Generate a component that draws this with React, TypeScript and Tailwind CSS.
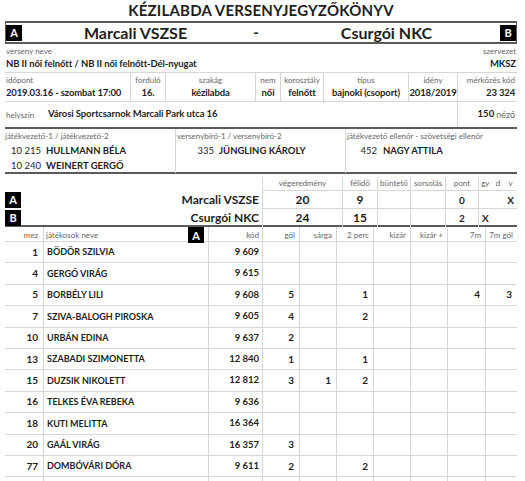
const players = [
  { mez: "1", name: "BÖDÖR SZILVIA", kod: "9 609", v: ["", "", "", "", "", "", ""] },
  { mez: "4", name: "GERGŐ VIRÁG", kod: "9 615", v: ["", "", "", "", "", "", ""] },
  { mez: "5", name: "BORBÉLY LILI", kod: "9 608", v: ["5", "", "1", "", "", "4", "3"] },
  { mez: "7", name: "SZIVA-BALOGH PIROSKA", kod: "9 605", v: ["4", "", "2", "", "", "", ""] },
  { mez: "10", name: "URBÁN EDINA", kod: "9 637", v: ["2", "", "", "", "", "", ""] },
  { mez: "13", name: "SZABADI SZIMONETTA", kod: "12 840", v: ["1", "", "1", "", "", "", ""] },
  { mez: "15", name: "DUZSIK NIKOLETT", kod: "12 812", v: ["3", "1", "2", "", "", "", ""] },
  { mez: "16", name: "TELKES ÉVA REBEKA", kod: "9 636", v: ["", "", "", "", "", "", ""] },
  { mez: "18", name: "KUTI MELITTA", kod: "16 364", v: ["", "", "", "", "", "", ""] },
  { mez: "20", name: "GAÁL VIRÁG", kod: "16 357", v: ["3", "", "", "", "", "", ""] },
  { mez: "77", name: "DOMBÓVÁRI DÓRA", kod: "9 611", v: ["2", "", "2", "", "", "", ""] },
  { mez: "", name: "", kod: "", v: ["", "", "", "", "", "", ""] },
];

const statHeads = ["gól", "sárga", "2 perc", "kizár", "kizár +", "7m", "7m gól"];

const Badge = ({ letter }: { letter: string }) => (
  <div className="w-[16px] h-[16px] bg-black text-white text-[11px] font-bold flex items-center justify-center leading-none">
    {letter}
  </div>
);

const playerGrid =
  "grid grid-cols-[38px_165px_54px_37px_37px_37px_37px_37px_38px_32px]";

const resultGrid = "grid grid-cols-[257px_80px_35px_33px_35px_33px_39px]";

export default function App() {
  return (
    <div className="w-[525px] h-[481px] overflow-hidden bg-white text-[#1e1e1e] font-[family-name:Lato,sans-serif]">
      <div className="w-[512px] ml-[5px]">
        {/* title */}
        <div className="h-[21px] flex items-center justify-center text-[15px] font-bold tracking-[0.2px]">
          KÉZILABDA VERSENYJEGYZŐKÖNYV
        </div>

        {/* teams */}
        <div className="h-[23px] border-y-2 border-x border-[#5a5a5a] flex items-center">
          <Badge letter="A" />
          <div className="flex-1 text-center text-[16px] font-bold">Marcali VSZSE</div>
          <div className="w-[14px] text-center text-[15px] font-bold">-</div>
          <div className="flex-1 text-center text-[16px] font-bold pl-[10px]">Csurgói NKC</div>
          <Badge letter="B" />
        </div>

        {/* competition */}
        <div className="flex justify-between text-[8px] text-[#666] h-[13px] items-end px-[1px]">
          <span>verseny neve</span>
          <span>szervezet</span>
        </div>
        <div className="flex justify-between text-[9.5px] font-bold h-[15px] items-center px-[1px] tracking-[-0.1px]">
          <span>NB II női felnőtt / NB II női felnőtt-Dél-nyugat</span>
          <span>MKSZ</span>
        </div>

        {/* info row */}
        <div className="grid grid-cols-[125px_35px_90px_25px_43px_85px_49px_60px] border-y border-[#d6d6d6]">
          {[
            ["időpont", "2019.03.16 - szombat 17:00", "text-left"],
            ["forduló", "16.", "text-center"],
            ["szakág", "kézilabda", "text-center"],
            ["nem", "női", "text-center"],
            ["korosztály", "felnőtt", "text-center"],
            ["típus", "bajnoki (csoport)", "text-center"],
            ["idény", "2018/2019", "text-center"],
            ["mérkőzés kód", "23 324", "text-right"],
          ].map(([label, value, align], i) => (
            <div
              key={label}
              className={`h-[28px] flex flex-col justify-center ${align} ${
                i > 0 ? "border-l border-[#d6d6d6]" : ""
              } ${i === 0 ? "pl-[1px]" : ""} ${i === 7 ? "pr-[2px]" : ""}`}
            >
              <div className="text-[8px] text-[#666] leading-[12px]">{label}</div>
              <div className="text-[9.5px] font-bold leading-[14px] whitespace-nowrap tracking-[-0.15px]">{value}</div>
            </div>
          ))}
        </div>

        {/* venue */}
        <div className="flex h-[25px]">
          <div className="flex-1 flex items-center pl-[1px]">
            <span className="text-[8px] text-[#666] w-[42px]">helyszín</span>
            <span className="text-[9.5px] font-bold tracking-[-0.1px]">Városi Sportcsarnok Marcali Park utca 16</span>
          </div>
          <div className="w-[60px] border-l border-[#d6d6d6] flex items-center justify-end pr-[2px] text-[9.5px]">
            <span className="font-bold">150</span>
            <span className="text-[#666] ml-[2px] text-[9px]">néző</span>
          </div>
        </div>

        {/* referees */}
        <div className="grid grid-cols-[170px_170px_172px] border-y-2 border-[#5a5a5a] h-[47px]">
          <div className="pt-[1px]">
            <div className="text-[8px] text-[#666] leading-[12px]">játékvezető-1 / játékvezető-2</div>
            <div className="flex text-[9.5px] leading-[15px] mt-[1px]">
              <span className="w-[36px] text-right">10 215</span>
              <span className="font-bold ml-[5px]">HULLMANN BÉLA</span>
            </div>
            <div className="flex text-[9.5px] leading-[15px]">
              <span className="w-[36px] text-right">10 240</span>
              <span className="font-bold ml-[5px]">WEINERT GERGŐ</span>
            </div>
          </div>
          <div className="pt-[1px] border-l border-[#d6d6d6] pl-[1px]">
            <div className="text-[8px] text-[#666] leading-[12px]">versenybíró-1 / versenybíró-2</div>
            <div className="flex text-[9.5px] leading-[15px] mt-[1px]">
              <span className="w-[37px] text-right">335</span>
              <span className="font-bold ml-[5px]">JÜNGLING KÁROLY</span>
            </div>
          </div>
          <div className="pt-[1px] border-l border-[#d6d6d6] pl-[1px]">
            <div className="text-[8px] text-[#666] leading-[12px]">játékvezető ellenőr - szövetségi ellenőr</div>
            <div className="flex text-[9.5px] leading-[15px] mt-[1px]">
              <span className="w-[30px] text-right">452</span>
              <span className="font-bold ml-[6px]">NAGY ATTILA</span>
            </div>
          </div>
        </div>

        {/* results */}
        <div className="mt-[3px] border-b-2 border-[#5a5a5a]">
          <div className={`${resultGrid} h-[13px] text-[8px] text-[#666]`}>
            <div />
            <div className="border-l border-[#d6d6d6] text-center">végeredmény</div>
            <div className="border-l border-[#d6d6d6] text-center">félidő</div>
            <div className="border-l border-[#d6d6d6] text-center">büntető</div>
            <div className="border-l border-[#d6d6d6] text-center">sorsolás</div>
            <div className="border-l border-[#d6d6d6] text-center">pont</div>
            <div className="border-l border-[#d6d6d6] grid grid-cols-3 text-center">
              <span>gy</span>
              <span>d</span>
              <span>v</span>
            </div>
          </div>
          {[
            { l: "A", team: "Marcali VSZSE", res: "20", half: "9", pt: "0", gy: "", d: "", v: "X" },
            { l: "B", team: "Csurgói NKC", res: "24", half: "15", pt: "2", gy: "X", d: "", v: "" },
          ].map((r, i) => (
            <div
              key={r.l}
              className={`${resultGrid} h-[17px] text-[12px] font-bold ${i === 0 ? "mb-[1px]" : ""}`}
            >
              <div className="flex items-center justify-between pr-[3px]">
                <Badge letter={r.l} />
                <span>{r.team}</span>
              </div>
              <div className="border-l border-t border-[#d6d6d6] flex items-center justify-center">{r.res}</div>
              <div className="border-l border-t border-[#d6d6d6] flex items-center justify-center">{r.half}</div>
              <div className="border-l border-t border-[#d6d6d6]" />
              <div className="border-l border-t border-[#d6d6d6]" />
              <div className="border-l border-t border-[#d6d6d6] flex items-center justify-center text-[10px]">{r.pt}</div>
              <div className="border-l border-t border-[#d6d6d6] grid grid-cols-3 items-center text-center text-[10px]">
                <span>{r.gy}</span>
                <span>{r.d}</span>
                <span>{r.v}</span>
              </div>
            </div>
          ))}
        </div>

        {/* players */}
        <div className={`${playerGrid} h-[15px] text-[8px] text-[#666] border-b border-[#d6d6d6]`}>
          <div className="flex items-center justify-end pr-[5px]">mez</div>
          <div className="border-l border-[#d6d6d6] flex items-center justify-between pl-[2px] pr-[4px]">
            <span>játékosok neve</span>
            <Badge letter="A" />
          </div>
          <div className="border-l border-[#d6d6d6] flex items-center justify-end pr-[3px]">kód</div>
          {statHeads.map((h) => (
            <div key={h} className="border-l border-[#d6d6d6] flex items-center justify-end pr-[4px] whitespace-nowrap">
              {h}
            </div>
          ))}
        </div>
        {players.map((p, idx) => (
          <div
            key={idx}
            className={`${playerGrid} h-[21.4px] text-[9px] font-bold border-b border-[#d6d6d6]`}
          >
            <div className="flex items-center justify-end pr-[5px] text-[10px]">{p.mez}</div>
            <div className="border-l border-[#d6d6d6] flex items-center pl-[3px]">{p.name}</div>
            <div className="border-l border-[#d6d6d6] flex items-center justify-end pr-[3px] text-[9.5px]">{p.kod}</div>
            {p.v.map((val, j) => (
              <div
                key={j}
                className="border-l border-[#d6d6d6] flex items-center justify-end pr-[5px] text-[10px]"
              >
                {val}
              </div>
            ))}
          </div>
        ))}
      </div>
    </div>
  );
}
